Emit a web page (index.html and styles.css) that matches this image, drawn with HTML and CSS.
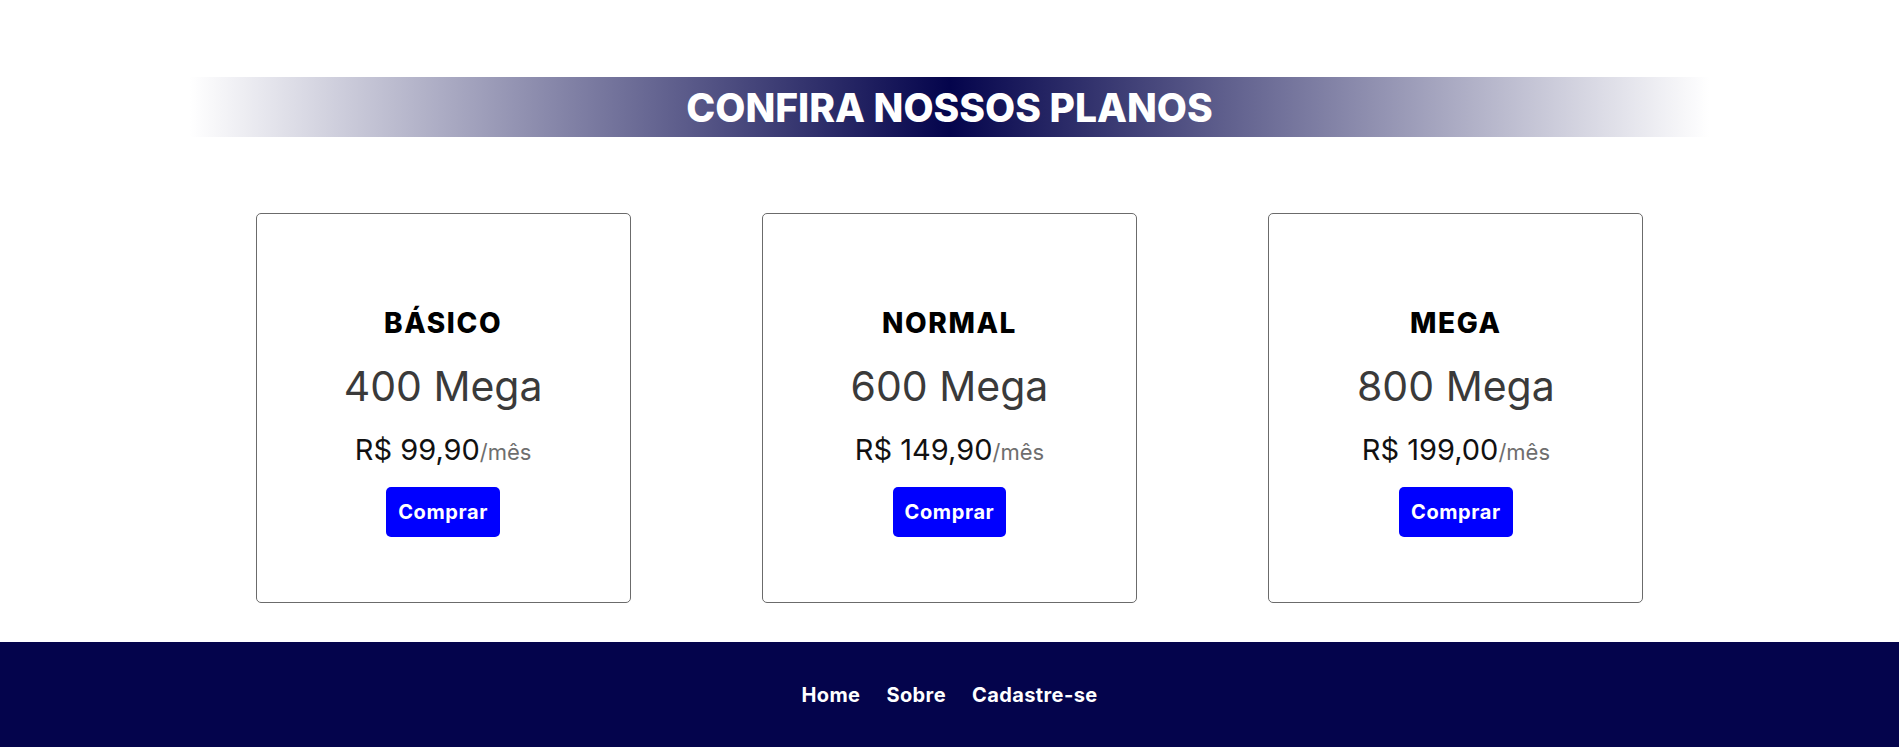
FILE: index.html
```html
<!DOCTYPE html>
<html lang="pt-BR">
<head>
<meta charset="utf-8">
<title>Planos</title>
<link rel="stylesheet" href="styles.css">
</head>
<body>
<main class="page">
  <section class="plans">
    <h1 class="plans-title">CONFIRA NOSSOS PLANOS</h1>
    <div class="plans-list">
      <div class="plan-card">
        <h2 class="plan-name">BÁSICO</h2>
        <p class="plan-speed">400 Mega</p>
        <p class="plan-price">R$ 99,90<span class="plan-period">/mês</span></p>
        <button class="plan-btn">Comprar</button>
      </div>
      <div class="plan-card">
        <h2 class="plan-name">NORMAL</h2>
        <p class="plan-speed">600 Mega</p>
        <p class="plan-price">R$ 149,90<span class="plan-period">/mês</span></p>
        <button class="plan-btn">Comprar</button>
      </div>
      <div class="plan-card">
        <h2 class="plan-name">MEGA</h2>
        <p class="plan-speed">800 Mega</p>
        <p class="plan-price">R$ 199,00<span class="plan-period">/mês</span></p>
        <button class="plan-btn">Comprar</button>
      </div>
    </div>
  </section>
</main>
<footer class="footer">
  <nav class="footer-nav">
    <a class="footer-link" href="#">Home</a>
    <a class="footer-link" href="#">Sobre</a>
    <a class="footer-link" href="#">Cadastre-se</a>
  </nav>
</footer>
</body>
</html>
```
FILE: styles.css
```css
* { box-sizing: border-box; }
html, body { margin: 0; padding: 0; }
body {
  font-family: Inter, "Noto Sans", sans-serif;
  background: #fff;
  width: 1899px;
}
.page { padding-top: 77px; padding-bottom: 39px; }
.plans { display: flex; flex-direction: column; align-items: center; }
.plans-title {
  width: 80%;
  height: 60px;
  margin: 0;
  display: flex;
  align-items: center;
  justify-content: center;
  background: linear-gradient(to right, #ffffff, #04044c, #ffffff);
  color: #fff;
  font-size: 39px;
  font-weight: 800;
  letter-spacing: 0;
}
.plans-list {
  width: 80%;
  margin-top: 76px;
  display: flex;
  justify-content: space-around;
}
.plan-card {
  width: 375px;
  height: 390px;
  border: 1px solid #6b6b6b;
  border-radius: 5px;
  display: flex;
  flex-direction: column;
  align-items: center;
  padding-top: 92px;
}
.plan-name {
  margin: 0;
  font-size: 28px;
  line-height: 34px;
  font-weight: 800;
  letter-spacing: 1.6px;
  color: #000;
}
.plan-speed {
  margin: 22px 0 0;
  font-size: 41px;
  line-height: 48px;
  font-weight: 400;
  color: #3a3a3a;
}
.plan-price {
  margin: 23px 0 0;
  font-size: 29px;
  line-height: 34px;
  color: #111;
}
.plan-period { font-size: 22px; color: #6e6e6e; }
.plan-btn {
  margin-top: 18px;
  height: 50px;
  padding: 0 12px;
  border: none;
  border-radius: 5px;
  background: #0000ff;
  color: #fff;
  font-family: inherit;
  font-size: 20px;
  font-weight: 700;
  letter-spacing: 0.6px;
  line-height: 30px;
}
.footer {
  background: #04044c;
  height: 120px;
  padding-top: 39px;
}
.footer-nav { display: flex; justify-content: center; gap: 26px; }
.footer-link {
  color: #fff;
  text-decoration: none;
  font-size: 20px;
  font-weight: 700;
  letter-spacing: 0.4px;
  line-height: 28px;
}
```
